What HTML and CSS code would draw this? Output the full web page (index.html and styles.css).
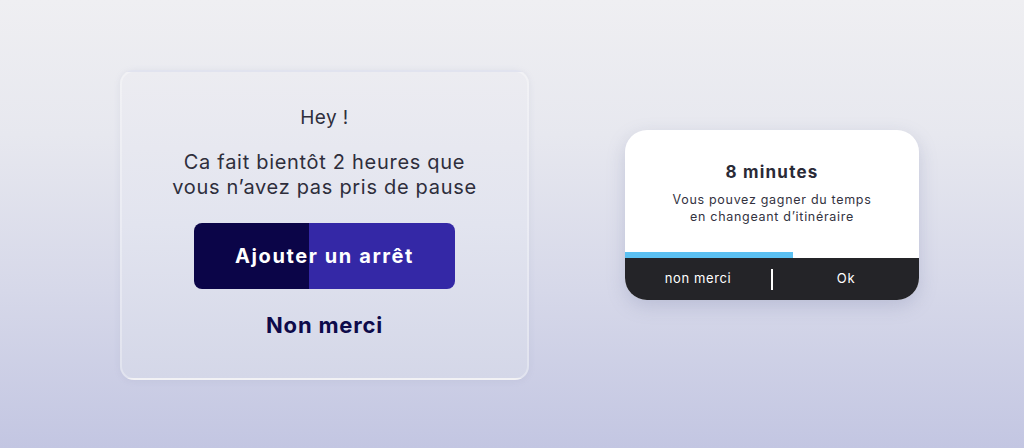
FILE: index.html
```html
<!DOCTYPE html>
<html lang="fr">
<head>
<meta charset="utf-8">
<link rel="stylesheet" href="styles.css">
</head>
<body>
<main class="stage">
  <section class="glass-card">
    <p class="hey">Hey !</p>
    <p class="message">Ca fait bientôt 2 heures que<br>vous n’avez pas pris de pause</p>
    <button class="primary-btn">Ajouter un arrêt</button>
    <button class="link-btn">Non merci</button>
  </section>
  <section class="toast">
    <div class="toast-body">
      <h2 class="toast-title">8 minutes</h2>
      <p class="toast-text">Vous pouvez gagner du temps<br>en changeant d’itinéraire</p>
    </div>
    <div class="progress"><div class="progress-fill"></div></div>
    <div class="toast-actions">
      <button class="toast-btn">non merci</button>
      <span class="divider"></span>
      <button class="toast-btn">Ok</button>
    </div>
  </section>
</main>
</body>
</html>
```
FILE: styles.css
```css
* { box-sizing: border-box; }
html, body { margin: 0; padding: 0; }
body {
  width: 1024px;
  height: 448px;
  overflow: hidden;
  font-family: Inter, "Liberation Sans", sans-serif;
  background: linear-gradient(180deg, #efeff2 0%, #e7e8ef 30%, #d6d8e9 65%, #c3c6e2 100%);
}
.stage {
  display: flex;
  align-items: flex-start;
  padding: 70px 0 0 120px;
  gap: 96px;
}
.glass-card {
  width: 409px;
  height: 310px;
  border-radius: 14px;
  border: 2px solid rgba(255,255,255,0.3);
  background: linear-gradient(180deg, #ececf1 0%, #e2e4ef 50%, #d4d7e8 100%);
  box-shadow: 0 1px 6px rgba(140,145,180,0.15);
  display: flex;
  flex-direction: column;
  align-items: center;
  padding-top: 34px;
  color: #2e2e3c;
}
.hey {
  margin: 0;
  font-size: 19px;
  line-height: 24px;
  letter-spacing: 0.4px;
}
.message {
  margin: 20px 0 0;
  font-size: 20px;
  line-height: 25px;
  text-align: center;
  letter-spacing: 0.7px;
}
.primary-btn {
  margin-top: 23px;
  width: 261px;
  height: 66px;
  border: none;
  border-radius: 8px;
  background: linear-gradient(90deg, #0b0548 0%, #0b0548 44%, #3428a6 44%, #3428a6 100%);
  color: #fff;
  font-family: inherit;
  font-size: 20px;
  font-weight: 700;
  letter-spacing: 1.6px;
}
.link-btn {
  margin-top: 23px;
  border: none;
  background: none;
  padding: 0;
  color: #0d0a4a;
  font-family: inherit;
  font-size: 22px;
  font-weight: 700;
  line-height: 26px;
  letter-spacing: 0.8px;
}
.toast {
  margin-top: 60px;
  width: 294px;
  height: 170px;
  border-radius: 22px;
  overflow: hidden;
  background: #fff;
  box-shadow: 0 6px 18px rgba(120,125,165,0.28);
  display: flex;
  flex-direction: column;
}
.toast-body {
  flex: 1;
  display: flex;
  flex-direction: column;
  align-items: center;
  padding-top: 31px;
  color: #2a2a36;
}
.toast-title {
  margin: 0;
  font-size: 17px;
  line-height: 22px;
  font-weight: 700;
  letter-spacing: 1.2px;
}
.toast-text {
  margin: 8px 0 0;
  font-size: 12.5px;
  line-height: 17px;
  text-align: center;
  color: #33333f;
  letter-spacing: 0.7px;
}
.progress {
  height: 6px;
  background: #fff;
}
.progress-fill {
  width: 168px;
  height: 100%;
  background: #5bc0f2;
}
.toast-actions {
  height: 42px;
  background: #242428;
  display: flex;
  align-items: center;
}
.toast-btn {
  flex: 1;
  height: 100%;
  border: none;
  background: none;
  color: #fff;
  font-family: inherit;
  font-size: 13px;
  padding: 0 0 2px;
  letter-spacing: 0.6px;
}
.divider {
  width: 2px;
  height: 21px;
  background: #fff;
}
```
